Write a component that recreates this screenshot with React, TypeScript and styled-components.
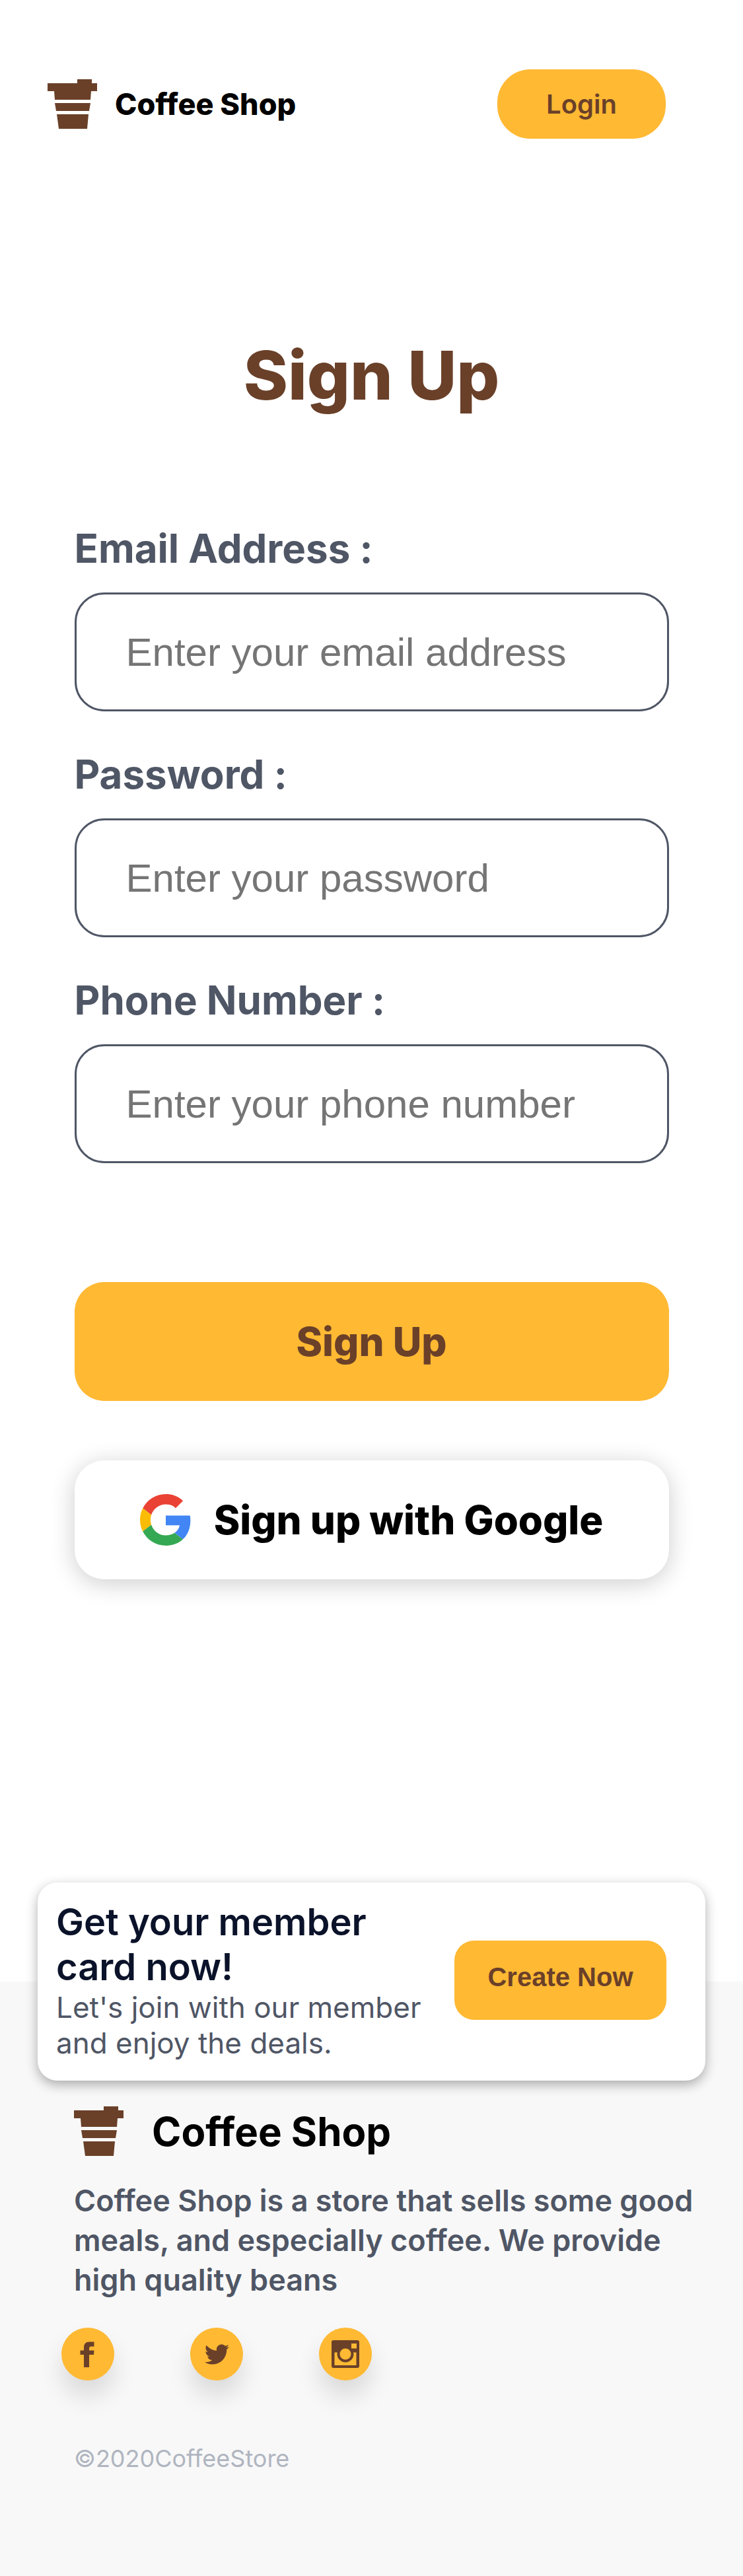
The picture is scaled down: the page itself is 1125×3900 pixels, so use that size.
import React from 'react';
import styled, { createGlobalStyle } from 'styled-components';

const color = {
  amber: '#ffb933',
  brown: '#6a4029',
  slate: '#4f5665',
  navy: '#0b132a',
  muted: '#afb5c0',
  footer: '#f8f8f8',
};
const sans = 'Inter, Roboto, sans-serif';
const plain = '"Liberation Sans", Arial, sans-serif';

const GlobalStyle = createGlobalStyle`
  *, *::before, *::after { box-sizing: border-box; }
  body { margin: 0; background: #ffffff; font-family: ${sans}; }
  h1, h2, p { margin: 0; }
  button, input { margin: 0; }
`;

const Header = styled.header`
  display: flex;
  align-items: center;
  justify-content: space-between;
  padding: 105px 117px 0 72px;
`;

const Brand = styled.a<{ $gap: number; $size: number; $weight: number }>`
  display: flex;
  align-items: center;
  gap: ${(p) => p.$gap}px;
  color: #000000;
  font-size: ${(p) => p.$size}px;
  font-weight: ${(p) => p.$weight};
  line-height: 72px;
  text-decoration: none;
`;

const Cup = styled.svg`
  flex: none;
  width: 75px;
  height: 75px;
  fill: ${color.brown};
`;

const Button = styled.button`
  border: 0;
  background: ${color.amber};
  color: ${color.brown};
  font: 700 40px ${plain};
  cursor: pointer;
`;

const LoginButton = styled(Button)`
  width: 255px;
  height: 105px;
  border-radius: 50px;
  font: 600 40px ${sans};
`;

const Title = styled.h1`
  margin-top: 296px;
  color: ${color.brown};
  font-size: 102px;
  font-weight: 800;
  line-height: 124px;
  text-align: center;
`;

const Form = styled.form`
  display: flex;
  flex-direction: column;
  gap: 59px;
  padding: 0 10%;
  margin-top: 164px;
`;

const Field = styled.div`
  display: flex;
  flex-direction: column;
  gap: 31px;
`;

const Label = styled.label`
  color: ${color.slate};
  font-size: 60px;
  font-weight: 700;
  line-height: 72px;
`;

const Input = styled.input`
  width: 100%;
  height: 180px;
  padding: 0 75px;
  border: 3px solid ${color.slate};
  border-radius: 45px;
  background: #ffffff;
  color: ${color.navy};
  font: 400 60px ${plain};

  &::placeholder {
    color: #757575;
    opacity: 1;
  }
`;

const Actions = styled.div`
  display: flex;
  flex-direction: column;
  gap: 90px;
  margin-top: 121px;
`;

const WideButton = styled(Button)`
  display: flex;
  align-items: center;
  justify-content: center;
  gap: 34px;
  height: 180px;
  border-radius: 45px;
  font: 800 60px ${sans};
`;

const GoogleButton = styled(WideButton)`
  background: #ffffff;
  color: #000000;
  box-shadow: 0 6px 36px rgba(0, 0, 0, 0.2);
`;

const GoogleMark = styled.svg`
  flex: none;
  width: 78px;
  height: 78px;
`;

const MemberCard = styled.section`
  position: relative;
  display: flex;
  align-items: flex-start;
  gap: 36px;
  min-height: 300px;
  margin: 459px 57px -150px;
  padding: 26px 59px 30px 28px;
  border-radius: 30px;
  background: #ffffff;
  box-shadow: 0 6px 18px rgba(0, 0, 0, 0.32);
`;

const MemberText = styled.div`
  flex: 1;
`;

const MemberTitle = styled.h2`
  color: ${color.navy};
  font-size: 56px;
  font-weight: 600;
  line-height: 68px;
`;

const MemberNote = styled.p`
  color: ${color.slate};
  font-size: 44px;
  line-height: 54px;
`;

const CreateButton = styled(Button)`
  flex: none;
  align-self: center;
  width: 321px;
  height: 120px;
  padding: 0 0 10px;
  border-radius: 30px;
`;

const Footer = styled.footer`
  padding: 189px 60px 156px 93px;
  background: ${color.footer};
`;

const FooterBlock = styled.div`
  display: flex;
  flex-direction: column;
  gap: 38px;
  padding-left: 19px;
`;

const About = styled.p`
  color: ${color.slate};
  font-size: 45px;
  font-weight: 600;
  line-height: 60px;
`;

const Socials = styled.nav`
  display: flex;
  gap: 115px;
  margin-top: 42px;
`;

const SocialLink = styled.a`
  display: block;
  width: 80px;
  height: 80px;
  border-radius: 50%;
  background: ${color.amber};
  box-shadow: 0 24px 36px rgba(0, 0, 0, 0.12);
`;

const SocialArt = styled.svg`
  display: block;
  width: 80px;
  height: 80px;
  fill: ${color.brown};
`;

const Copyright = styled.p`
  margin-top: 96px;
  padding-left: 19px;
  color: ${color.muted};
  font-size: 36px;
  line-height: 44px;
`;

const CupIcon = () => (
  <Cup viewBox="0 0 75 75" aria-hidden="true">
    <path d="M45 0H67V6H75V18H66L65 31H11L10 18H0V6H45Z" />
    <path d="M11 36H65L63 48H13Z" />
    <path d="M14 53H62L60 75H17Z" />
  </Cup>
);

const GoogleIcon = () => (
  <GoogleMark viewBox="0 0 48 48" aria-hidden="true">
    <path fill="#EA4335" d="M24 9.5c3.54 0 6.71 1.22 9.21 3.6l6.85-6.85C35.9 2.38 30.47 0 24 0 14.62 0 6.51 5.38 2.56 13.22l7.98 6.19C12.43 13.72 17.74 9.5 24 9.5z" />
    <path fill="#4285F4" d="M46.98 24.55c0-1.57-.15-3.09-.38-4.55H24v9.02h12.94c-.58 2.96-2.26 5.48-4.78 7.18l7.73 6c4.51-4.18 7.09-10.36 7.09-17.65z" />
    <path fill="#FBBC05" d="M10.53 28.59c-.48-1.45-.76-2.99-.76-4.59s.27-3.14.76-4.59l-7.98-6.19C.92 16.46 0 20.12 0 24c0 3.88.92 7.54 2.56 10.78l7.97-6.19z" />
    <path fill="#34A853" d="M24 48c6.48 0 11.93-2.13 15.89-5.81l-7.73-6c-2.15 1.45-4.92 2.3-8.16 2.3-6.26 0-11.57-4.22-13.47-9.91l-7.98 6.19C6.51 42.62 14.62 48 24 48z" />
  </GoogleMark>
);

const fields = [
  { id: 'email', type: 'email', label: 'Email Address :', hint: 'Enter your email address' },
  { id: 'password', type: 'password', label: 'Password :', hint: 'Enter your password' },
  { id: 'phone', type: 'tel', label: 'Phone Number :', hint: 'Enter your phone number' },
];

const socials = [
  {
    name: 'Facebook',
    art: <path d="M34 60V41H28.500V34.500H34V30C34 24.500 37 21.500 42 21.500H49.500V28.500H45C43 28.500 42 29.500 42 31.500V34.500H49.500L49 41H42V60Z" />,
  },
  {
    name: 'Twitter',
    art: (
      <svg x="22" y="22" width="37" height="37" viewBox="0 0 24 24">
        <path d="M23.953 4.570a10 10 0 01-2.825.775 4.958 4.958 0 002.163-2.723c-.951.555-2.005.959-3.127 1.184a4.920 4.920 0 00-8.384 4.482C7.690 8.095 4.067 6.130 1.640 3.162a4.822 4.822 0 00-.666 2.475c0 1.710.870 3.213 2.188 4.096a4.904 4.904 0 01-2.228-.616v.060a4.923 4.923 0 003.946 4.827 4.996 4.996 0 01-2.212.085 4.936 4.936 0 004.604 3.417 9.867 9.867 0 01-6.102 2.105c-.390 0-.779-.023-1.170-.067a13.995 13.995 0 007.557 2.209c9.053 0 13.998-7.496 13.998-13.985 0-.210 0-.420-.015-.630A9.935 9.935 0 0024 4.590z" />
      </svg>
    ),
  },
  {
    name: 'Instagram',
    art: (
      <>
        <path
          fillRule="evenodd"
          d="M22 19H58Q61 19 61 22V58Q61 61 58 61H22Q19 61 19 58V22Q19 19 22 19ZM23.500 37.500V57H56.500V37.500H52A12 12 0 1 1 28 37.500ZM49 24V31.500H57V24Z"
        />
        <circle cx="40" cy="40" r="12.500" />
        <circle cx="40" cy="40" r="8.500" fill={color.amber} />
      </>
    ),
  },
];

export default function App() {
  return (
    <>
      <GlobalStyle />
      <Header>
        <Brand href="#" $gap={27} $size={45} $weight={800}>
          <CupIcon />
          Coffee Shop
        </Brand>
        <LoginButton type="button">Login</LoginButton>
      </Header>
      <main>
        <Title>Sign Up</Title>
        <Form onSubmit={(e) => e.preventDefault()}>
          {fields.map((f) => (
            <Field key={f.id}>
              <Label htmlFor={f.id}>{f.label}</Label>
              <Input id={f.id} type={f.type} placeholder={f.hint} />
            </Field>
          ))}
          <Actions>
            <WideButton type="submit">Sign Up</WideButton>
            <GoogleButton type="button">
              <GoogleIcon />
              Sign up with Google
            </GoogleButton>
          </Actions>
        </Form>
        <MemberCard>
          <MemberText>
            <MemberTitle>Get your member card now!</MemberTitle>
            <MemberNote>Let's join with our member and enjoy the deals.</MemberNote>
          </MemberText>
          <CreateButton type="button">Create Now</CreateButton>
        </MemberCard>
      </main>
      <Footer>
        <FooterBlock>
          <Brand href="#" $gap={43} $size={60} $weight={700}>
            <CupIcon />
            Coffee Shop
          </Brand>
          <About>
            Coffee Shop is a store that sells some good meals, and especially coffee. We provide high
            quality beans
          </About>
        </FooterBlock>
        <Socials aria-label="Social media">
          {socials.map((s) => (
            <SocialLink key={s.name} href="#" aria-label={s.name}>
              <SocialArt viewBox="0 0 80 80" aria-hidden="true">
                {s.art}
              </SocialArt>
            </SocialLink>
          ))}
        </Socials>
        <Copyright>©2020CoffeeStore</Copyright>
      </Footer>
    </>
  );
}
